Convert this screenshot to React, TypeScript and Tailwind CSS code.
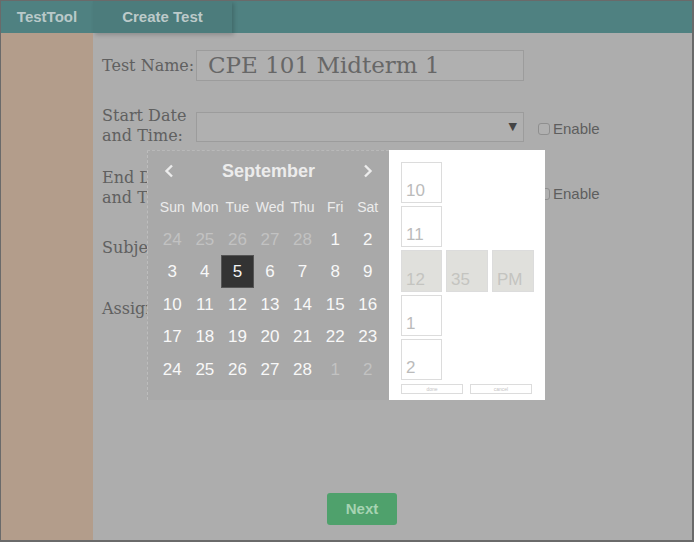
import React from 'react';

const serif = { fontFamily: '"DejaVu Serif", serif' };

const weeks: { d: number; muted?: boolean; selected?: boolean }[][] = [
  [{ d: 24, muted: true }, { d: 25, muted: true }, { d: 26, muted: true }, { d: 27, muted: true }, { d: 28, muted: true }, { d: 1 }, { d: 2 }],
  [{ d: 3 }, { d: 4 }, { d: 5, selected: true }, { d: 6 }, { d: 7 }, { d: 8 }, { d: 9 }],
  [{ d: 10 }, { d: 11 }, { d: 12 }, { d: 13 }, { d: 14 }, { d: 15 }, { d: 16 }],
  [{ d: 17 }, { d: 18 }, { d: 19 }, { d: 20 }, { d: 21 }, { d: 22 }, { d: 23 }],
  [{ d: 24 }, { d: 25 }, { d: 26 }, { d: 27 }, { d: 28 }, { d: 1, muted: true }, { d: 2, muted: true }],
];

const days = ['Sun', 'Mon', 'Tue', 'Wed', 'Thu', 'Fri', 'Sat'];

const EnableBox = () => (
  <label className="flex items-center gap-[3px] text-[15px] text-[#5e5e5e]" style={{ fontFamily: '"Liberation Sans", sans-serif' }}>
    <span className="w-[12px] h-[12px] rounded-[3px] border border-[#8f8f8f] bg-[#b0b0b0]" />
    Enable
  </label>
);

const TimeCell = ({ value, active = false, wide = false }: { value: string; active?: boolean; wide?: boolean }) => (
  <div
    className={`${active ? 'h-[42px]' : 'h-[41px]'} ${wide ? 'w-[42px]' : 'w-[41px]'} border border-[#dcdcdc] flex items-end pl-[4px] pb-[1px] text-[17px] leading-[20px] ${
      active ? 'bg-[#e0e0dc] text-[#c4c4c0]' : 'bg-white text-[#bbbbbb]'
    }`}
  >
    {value}
  </div>
);

const DatePicker = () => (
  <div className="absolute left-[54px] top-[117px] flex" style={{ fontFamily: '"Liberation Sans", Arial, sans-serif' }}>
    <div className="w-[242px] h-[250px] bg-[#a9a9a9] border-t border-[#b9b9b9] border-l border-l-[#bdbdbd] border-dashed">
      <div className="h-[40px] flex items-center justify-between px-[16px] text-[#ececec]">
        <svg width="10" height="14" viewBox="0 0 10 14" fill="none" stroke="#ececec" strokeWidth="2.4">
          <path d="M8 1.5 2.5 7 8 12.5" />
        </svg>
        <span className="text-[18px] font-bold">September</span>
        <svg width="10" height="14" viewBox="0 0 10 14" fill="none" stroke="#ececec" strokeWidth="2.4">
          <path d="M2 1.5 7.5 7 2 12.5" />
        </svg>
      </div>
      <div className="ml-[8px] w-[228px] grid grid-cols-7">
        {days.map((d) => (
          <div key={d} className="h-[32px] flex items-center justify-center text-[14px] text-[#ececec]">
            {d}
          </div>
        ))}
        {weeks.flat().map((c, i) => (
          <div key={i} className="h-[32.5px] flex items-center justify-center">
            <span
              className={`w-[33px] h-[33px] flex items-center justify-center text-[17px] ${
                c.selected ? 'bg-[#333333] border border-[#555] text-[#f2f2f2]' : c.muted ? 'text-[#c2c2c2]' : 'text-[#f8f8f8]'
              }`}
            >
              {c.d}
            </span>
          </div>
        ))}
      </div>
    </div>
    <div className="w-[156px] h-[250px] bg-white pt-[12px] pl-[12px] flex flex-col gap-[3px]">
      <TimeCell value="10" />
      <TimeCell value="11" />
      <div className="flex gap-[4px]">
        <TimeCell value="12" active />
        <TimeCell value="35" active wide />
        <TimeCell value="PM" active wide />
      </div>
      <TimeCell value="1" />
      <TimeCell value="2" />
      <div className="flex gap-[7px] mt-[1px]">
        <button className="w-[62px] h-[10px] border border-[#dcdcdc] text-[5px] leading-[8px] text-[#c4c4c4]">done</button>
        <button className="w-[62px] h-[10px] border border-[#dcdcdc] text-[5px] leading-[8px] text-[#c4c4c4]">cancel</button>
      </div>
    </div>
  </div>
);

export default function App() {
  return (
    <div className="w-[694px] h-[542px] flex flex-col border border-[#6a6a6a] border-r-2 border-b-2 overflow-hidden bg-[#adadad]">
      <header className="h-[32px] bg-[#4f8181] flex text-[15px] font-bold" style={{ fontFamily: '"Liberation Sans", Arial, sans-serif' }}>
        <div className="w-[92px] flex items-center justify-center text-[#b9c9c9]">TestTool</div>
        <div className="w-[139px] bg-[#4c7c7c] shadow-[2px_2px_4px_rgba(0,0,0,0.18)] flex items-center justify-center text-[#bccaca]">
          Create Test
        </div>
      </header>
      <div className="flex flex-1">
        <aside className="w-[92px] bg-[#b39d8b]" />
        <main className="flex-1 relative pl-[9px] pt-[17px] flex flex-col text-[#606060]" style={serif}>
          <div className="flex items-center h-[31px]">
            <span className="w-[94px] text-[16px]">Test Name:</span>
            <div className="w-[328px] h-[31px] border border-[#9c9c9c] bg-[#b0b0b0] pl-[11px] flex items-center text-[23px] text-[#676767]">
              CPE 101 Midterm 1
            </div>
          </div>
          <div className="flex items-start mt-[25px] h-[40px]">
            <span className="w-[94px] text-[16px] leading-[20px]">Start Date and Time:</span>
            <div className="mt-[6px] w-[328px] h-[30px] border border-[#9c9c9c] bg-[#b0b0b0] flex items-center justify-end pr-[6px]">
              <span className="text-[11px] text-[#444]">▼</span>
            </div>
            <div className="ml-[14px] mt-[12px]">
              <EnableBox />
            </div>
          </div>
          <div className="flex items-start mt-[22px] h-[40px]">
            <span className="w-[94px] text-[16px] leading-[20px]">End Date and Time:</span>
            <div className="mt-[6px] w-[328px] h-[30px] border border-[#9c9c9c] bg-[#b0b0b0]" />
            <div className="ml-[14px] mt-[15px]">
              <EnableBox />
            </div>
          </div>
          <div className="flex items-center mt-[28px] h-[24px]">
            <span className="text-[16px]">Subject:</span>
          </div>
          <div className="flex items-center mt-[37px] h-[24px]">
            <span className="text-[16px]">Assignment:</span>
          </div>
          <button
            className="ml-[225px] mt-[172px] w-[70px] h-[32px] rounded-[3px] bg-[#4fa16c] text-[#a6d3b2] text-[15px] font-bold"
            style={{ fontFamily: '"Liberation Sans", Arial, sans-serif' }}
          >
            Next
          </button>
          <DatePicker />
        </main>
      </div>
    </div>
  );
}
